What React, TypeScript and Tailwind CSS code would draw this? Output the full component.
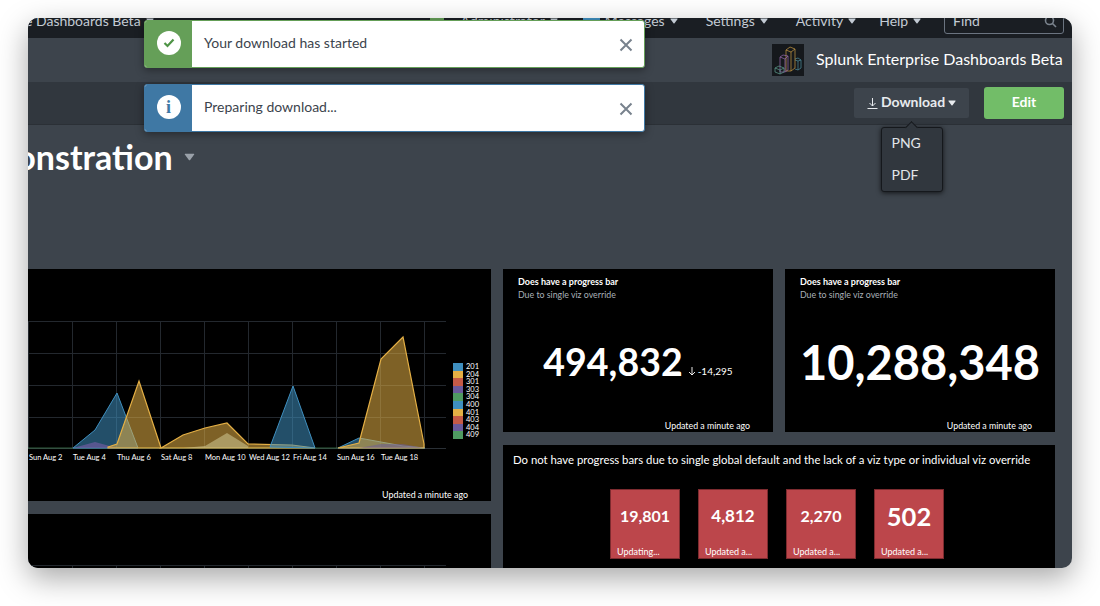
import type { ReactNode } from "react";

const font = "font-['Lato','Liberation_Sans',sans-serif]";

const legend = [
  { label: "201", color: "#3f8fbf" },
  { label: "204", color: "#e5b045" },
  { label: "301", color: "#c55a47" },
  { label: "303", color: "#6a5a9c" },
  { label: "304", color: "#4f9a62" },
  { label: "400", color: "#3f8fbf" },
  { label: "401", color: "#e5b045" },
  { label: "403", color: "#c55a47" },
  { label: "404", color: "#6a5a9c" },
  { label: "409", color: "#4f9a62" },
];

const dates = [
  { label: "Sun Aug 2", x: 1 },
  { label: "Tue Aug 4", x: 45 },
  { label: "Thu Aug 6", x: 89 },
  { label: "Sat Aug 8", x: 133 },
  { label: "Mon Aug 10", x: 177 },
  { label: "Wed Aug 12", x: 221 },
  { label: "Fri Aug 14", x: 265 },
  { label: "Sun Aug 16", x: 309 },
  { label: "Tue Aug 18", x: 353 },
];

const tiles = [
  { value: "19,801", note: "Updating...", size: "text-[16px]" },
  { value: "4,812", note: "Updated a...", size: "text-[17px]" },
  { value: "2,270", note: "Updated a...", size: "text-[16px]" },
  { value: "502", note: "Updated a...", size: "text-[25.500px]" },
];

const gridX = [0, 44, 88, 132, 176, 220, 264, 308, 352, 396];
const gridY = [0, 32, 64, 96];

function Caret({ className }: { className?: string }) {
  return (
    <svg width="8" height="6" viewBox="0 0 8 6" className={className} fill="currentColor">
      <path d="M0.800 0.500h6.400q0.700 0 0.300 0.700L4.500 5.200q-0.500 0.600-1 0L0.500 1.200q-0.400-0.700 0.300-0.700z" />
    </svg>
  );
}

function NavItem({ label, className }: { label: string; className?: string }) {
  return (
    <span className={`flex shrink-0 items-center gap-[5px] text-[#c3cbd4] ${className ?? ""}`}>
      {label}
      <Caret />
    </span>
  );
}

function Toast({ color, text, icon }: { color: string; text: string; icon: ReactNode }) {
  return (
    <div
      className="flex h-[48px] w-[501px] overflow-hidden rounded-[3px] border bg-white shadow-[0_2px_8px_rgba(0,0,0,0.4)]"
      style={{ borderColor: color }}
    >
      <div className="flex w-[47px] items-center justify-center pb-[2px]" style={{ backgroundColor: color }}>
        {icon}
      </div>
      <div className="flex flex-1 items-center justify-between pb-[4px] pl-[12px] pr-[11px] text-[14px] text-[#3c444d]">
        <span>{text}</span>
        <svg width="14" height="14" viewBox="0 0 14 14" stroke="#78828d" strokeWidth="2" className="mt-[5px]">
          <path d="M1.500 1.500l11 11M12.500 1.500l-11 11" />
        </svg>
      </div>
    </div>
  );
}

function Chart() {
  return (
    <svg width="425" height="130" viewBox="0 0 425 130" className="absolute left-0 top-[52px]">
      {gridY.map((y) => (
        <line key={y} x1="0" x2="418" y1={y + 0.5} y2={y + 0.5} stroke="#23282e" />
      ))}
      {gridX.map((x) => (
        <line key={x} x1={x + 0.5} x2={x + 0.5} y1="0" y2="127" stroke="#23282e" />
      ))}
      <line x1="0" x2="418" y1="127.500" y2="127.500" stroke="#2a3036" />
      <line x1="0" x2="310" y1="127" y2="127" stroke="#4f9a62" strokeOpacity="0.6" />
      <path d="M45 127 L67 109 L89 72 L110 127 Z" fill="#3f8fbf" fillOpacity="0.55" stroke="#3f8fbf" />
      <path d="M45 127 L67 121 L89 127 Z" fill="#6a5a9c" fillOpacity="0.75" />
      <path d="M80 126 L89 123 L111 60 L133 127 L80 127 Z" fill="#e5b045" fillOpacity="0.55" stroke="#e5b045" strokeWidth="1.200" />
      <path d="M133 127 L155 114 L177 107 L199 102 L220 123 L264 124 L287 127 Z" fill="#e5b045" fillOpacity="0.55" stroke="#e5b045" strokeWidth="1.200" />
      <path d="M155 127 L177 125 L199 112 L220 125 L220 127 Z" fill="#c9c08a" fillOpacity="0.6" />
      <path d="M242 126 L265 65 L287 127 Z" fill="#3f8fbf" fillOpacity="0.55" stroke="#3f8fbf" />
      <path d="M310 127 L331 117 L353 121 L375 125 L397 127 Z" fill="#3f8fbf" fillOpacity="0.55" stroke="#3f8fbf" />
      <path d="M310 127 L331 122 L353 38 L375 16 L396 123 L396 127 Z" fill="#e5b045" fillOpacity="0.55" stroke="#e5b045" strokeWidth="1.200" />
      <path d="M331 127 L353 123 L375 123 L396 127 Z" fill="#6a5a9c" fillOpacity="0.5" />
    </svg>
  );
}

function Logo() {
  return (
    <svg width="32" height="32" viewBox="0 0 32 32" fill="none" strokeWidth="0.700" className="bg-[#15181c]">
      <path d="M23 15l3-1 3 2v8l-3 2-3-1M23 16l3 1 3-1M26 17v9" stroke="#4f8f9f" />
      <path d="M14 6l4-3 5 2-4 3zM14 6v21h5V8M23 5v19l-4 3" stroke="#c99b43" />
      <path d="M8 13l3-2 5 1-3 3zM8 13v15h5V15M16 12v14l-3 2" stroke="#9b6bb0" />
      <path d="M3 24l4-2 5 2v4l-4 2-5-2zM3 24l5 2 4-2M8 26v4" stroke="#5f9f8f" />
    </svg>
  );
}

function SinglePanel({ value, delta, size }: { value: string; delta?: string; size: string }) {
  return (
    <div className="flex h-[163px] w-[270px] flex-col bg-black pb-0 pl-[15px] pr-[15px] pt-[7px] text-white">
      <div className="text-[9px] font-bold leading-[12px]">Does have a progress bar</div>
      <div className="text-[8.800px] leading-[13px] text-[#a9b0b8]">Due to single viz override</div>
      <div className="flex flex-1 items-center justify-center gap-[5px] pt-[3px]">
        <span className={`${size} font-bold leading-none`}>{value}</span>
        {delta && (
          <span className="mt-[19px] flex items-center text-[10px]">
            <svg width="8" height="9" viewBox="0 0 8 9" fill="none" stroke="white" strokeWidth="0.900" className="mr-[2px]">
              <path d="M4 0v8M1 5l3 3 3-3" />
            </svg>
            {delta}
          </span>
        )}
      </div>
      <div className="pr-[8px] text-right text-[8.800px] leading-[12px]">Updated a minute ago</div>
    </div>
  );
}

export default function App() {
  return (
    <div className={`${font} h-[606px] w-[1100px] overflow-hidden bg-white pl-[28px] pt-[18px]`}>
      <div className="relative flex h-[550px] w-[1044px] flex-col overflow-hidden rounded-[10px] bg-[#3d444c] shadow-[0_10px_30px_rgba(0,0,0,0.35)]">
        {/* top nav, scrolled so its upper edge is cut */}
        <div className="h-[20px] shrink-0 overflow-hidden bg-[#1a1e23]">
          <div className="-mt-[10px] flex h-[26px] items-center pr-[8px] text-[14px] leading-none">
            <NavItem label="e Dashboards Beta" className="-ml-[3px]" />
            <span className="ml-[276px] h-[10px] w-[14px] shrink-0 bg-[#659f58]" />
            <NavItem label="Administrator" className="ml-[17px]" />
            <span className="ml-[25px] h-[10px] w-[17px] shrink-0 bg-[#3f8fbf]" />
            <NavItem label="Messages" className="ml-[5px]" />
            <NavItem label="Settings" className="ml-[28px]" />
            <NavItem label="Activity" className="ml-[28px]" />
            <NavItem label="Help" className="ml-[23px]" />
            <div className="ml-auto flex h-[26px] w-[120px] shrink-0 items-center justify-between rounded-[3px] border border-[#6b7480] pl-[8px] pr-[6px] text-[#c3cbd4]">
              Find
              <svg width="13" height="13" viewBox="0 0 13 13" fill="none" stroke="#7a838d" strokeWidth="1.600">
                <circle cx="5.500" cy="5.500" r="4" />
                <path d="M8.500 8.500l3.500 3.500" />
              </svg>
            </div>
          </div>
        </div>

        {/* app bar */}
        <div className="flex h-[44px] shrink-0 items-center justify-end gap-[12px] bg-[#3d444c] pr-[8px]">
          <Logo />
          <span className="w-[248px] whitespace-nowrap pb-[2px] text-[16px] text-white">Splunk Enterprise Dashboards Beta</span>
        </div>

        {/* dashboard bar */}
        <div className="flex h-[43px] shrink-0 items-center justify-end gap-[15px] border-b border-[#2b3036] bg-[#31373e] pr-[8px]">
          <button className="flex h-[30px] w-[115px] items-center justify-center gap-[3px] rounded-[2px] bg-[#3d444c] pb-[3px] text-[14px] font-bold text-[#e8ebee]">
            <svg width="11" height="11" viewBox="0 0 11 11" fill="none" stroke="#e8ebee" strokeWidth="1" className="mt-[3px]">
              <path d="M5.500 0v8M2.500 5l3 3 3-3M0.500 10.500h10" />
            </svg>
            Download
            <Caret className="mt-[3px]" />
          </button>
          <button className="h-[32px] w-[80px] rounded-[3px] bg-[#72bd68] pb-[3px] text-[14px] font-bold text-white">Edit</button>
        </div>

        {/* title */}
        <div className="flex h-[144px] shrink-0 items-start overflow-hidden pt-[10px]">
          <h1 className="-ml-[84px] text-[34px] font-bold leading-[44px] text-white">Demonstration</h1>
          <Caret className="ml-[11px] mt-[18px] h-[8px] w-[11px] text-[#9aa1a9]" />
        </div>

        {/* panels */}
        <div className="flex gap-[12px]">
          <div className="flex w-[463px] shrink-0 flex-col gap-[13px]">
            <div className="relative h-[232px] bg-black text-white">
              <Chart />
              <div className="absolute left-0 top-[183px] h-[12px] w-[419px] text-[7.500px] leading-[12px]">
                {dates.map((d) => (
                  <span key={d.label} className="absolute whitespace-nowrap" style={{ left: d.x }}>
                    {d.label}
                  </span>
                ))}
              </div>
              <div className="absolute left-[425px] top-[94px] flex flex-col">
                {legend.map((l) => (
                  <div key={l.label} className="flex h-[7.600px] items-center gap-[3px] text-[7.500px] leading-none">
                    <span className="h-[7.600px] w-[10px]" style={{ backgroundColor: l.color }} />
                    {l.label}
                  </div>
                ))}
              </div>
              <div className="absolute bottom-0 right-[23px] text-[8.900px] leading-[12px]">Updated a minute ago</div>
            </div>
            <div className="relative h-[54px] bg-black">
              <svg width="425" height="54" viewBox="0 0 425 54" className="absolute left-0 top-0">
                <line x1="0" x2="418" y1="51.500" y2="51.500" stroke="#23282e" />
                {gridX.map((x) => (
                  <line key={x} x1={x + 0.5} x2={x + 0.5} y1="51" y2="54" stroke="#23282e" />
                ))}
              </svg>
            </div>
          </div>

          <div className="flex w-[552px] shrink-0 flex-col gap-[13px]">
            <div className="flex gap-[12px]">
              <SinglePanel value="494,832" delta="-14,295" size="text-[37.500px]" />
              <SinglePanel value="10,288,348" size="text-[47px]" />
            </div>
            <div className="h-[123px] bg-black px-[10px] pt-[8px] text-white">
              <div className="whitespace-nowrap text-[11.350px] leading-[14px]">
                Do not have progress bars due to single global default and the lack of a viz type or individual viz override
              </div>
              <div className="ml-[97px] mt-[22px] flex gap-[18px]">
                {tiles.map((t) => (
                  <div
                    key={t.value}
                    className="flex h-[70px] w-[70px] flex-col border border-[#7d2b2f] bg-[#bc464b] text-white"
                  >
                    <div className={`${t.size} flex flex-1 items-center justify-center pb-[4px] font-bold`}>{t.value}</div>
                    <div className="pb-[1px] pl-[6px] text-[9px] leading-[11px]">{t.note}</div>
                  </div>
                ))}
              </div>
            </div>
          </div>
        </div>

        {/* toasts */}
        <div className="absolute left-[116px] top-[2px] flex flex-col gap-[16px]">
          <Toast
            color="#659f58"
            text="Your download has started"
            icon={
              <span className="flex h-[24px] w-[24px] items-center justify-center rounded-full bg-white">
                <svg width="12" height="10" viewBox="0 0 12 10" fill="none" stroke="#4f9446" strokeWidth="2.200">
                  <path d="M1.500 5l3 3 6-6.500" />
                </svg>
              </span>
            }
          />
          <Toast
            color="#3f78a4"
            text="Preparing download..."
            icon={
              <span className="flex h-[24px] w-[24px] items-center justify-center rounded-full bg-white font-['Liberation_Serif',serif] text-[18px] font-bold leading-none text-[#3f78a4]">
                i
              </span>
            }
          />
        </div>

        {/* download menu */}
        <div className="absolute left-[852.500px] top-[109px] h-[65px] w-[62px] rounded-[3px] border-[1.500px] border-[#15181c] bg-[#31373e] pl-[10px] text-[14px] text-[#e1e5e9] shadow-[0_1px_5px_rgba(0,0,0,0.7)]">
          <div className="absolute -top-[5.500px] left-[25px] h-[9px] w-[9px] rotate-45 border-l border-t border-[#15181c] bg-[#31373e]" />
          <div className="mt-[6px] leading-[18px]">PNG</div>
          <div className="mt-[14px] leading-[18px]">PDF</div>
        </div>
      </div>
    </div>
  );
}
